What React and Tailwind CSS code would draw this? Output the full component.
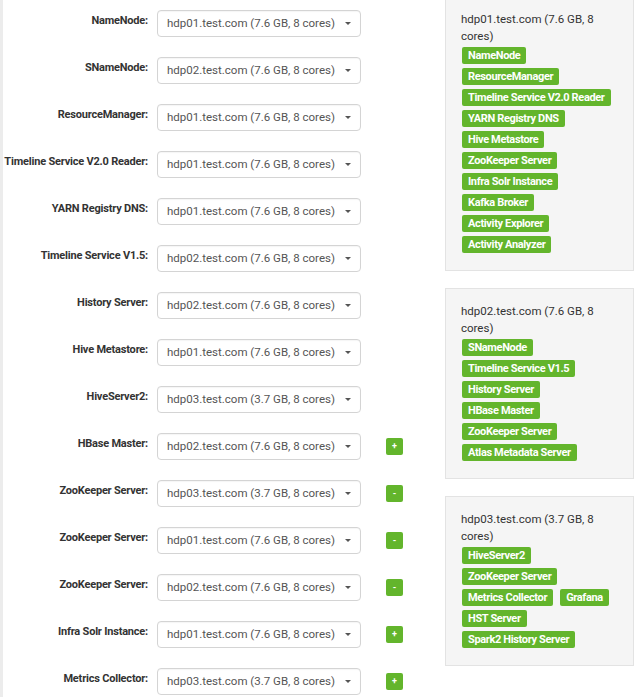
import React from 'react';

const rows = [
  { label: 'NameNode:', host: 'hdp01.test.com (7.6 GB, 8 cores)' },
  { label: 'SNameNode:', host: 'hdp02.test.com (7.6 GB, 8 cores)' },
  { label: 'ResourceManager:', host: 'hdp01.test.com (7.6 GB, 8 cores)' },
  { label: 'Timeline Service V2.0 Reader:', host: 'hdp01.test.com (7.6 GB, 8 cores)' },
  { label: 'YARN Registry DNS:', host: 'hdp01.test.com (7.6 GB, 8 cores)' },
  { label: 'Timeline Service V1.5:', host: 'hdp02.test.com (7.6 GB, 8 cores)' },
  { label: 'History Server:', host: 'hdp02.test.com (7.6 GB, 8 cores)' },
  { label: 'Hive Metastore:', host: 'hdp01.test.com (7.6 GB, 8 cores)' },
  { label: 'HiveServer2:', host: 'hdp03.test.com (3.7 GB, 8 cores)' },
  { label: 'HBase Master:', host: 'hdp02.test.com (7.6 GB, 8 cores)', btn: '+' },
  { label: 'ZooKeeper Server:', host: 'hdp03.test.com (3.7 GB, 8 cores)', btn: '-' },
  { label: 'ZooKeeper Server:', host: 'hdp01.test.com (7.6 GB, 8 cores)', btn: '-' },
  { label: 'ZooKeeper Server:', host: 'hdp02.test.com (7.6 GB, 8 cores)', btn: '-' },
  { label: 'Infra Solr Instance:', host: 'hdp01.test.com (7.6 GB, 8 cores)', btn: '+' },
  { label: 'Metrics Collector:', host: 'hdp03.test.com (3.7 GB, 8 cores)', btn: '+' },
];

const hosts = [
  {
    name: 'hdp01.test.com (7.6 GB, 8 cores)',
    comps: [['NameNode'], ['ResourceManager'], ['Timeline Service V2.0 Reader'], ['YARN Registry DNS'], ['Hive Metastore'], ['ZooKeeper Server'], ['Infra Solr Instance'], ['Kafka Broker'], ['Activity Explorer'], ['Activity Analyzer']],
  },
  {
    name: 'hdp02.test.com (7.6 GB, 8 cores)',
    comps: [['SNameNode'], ['Timeline Service V1.5'], ['History Server'], ['HBase Master'], ['ZooKeeper Server'], ['Atlas Metadata Server']],
  },
  {
    name: 'hdp03.test.com (3.7 GB, 8 cores)',
    comps: [['HiveServer2'], ['ZooKeeper Server'], ['Metrics Collector', 'Grafana'], ['HST Server'], ['Spark2 History Server']],
  },
];

const HostSelect = ({ value }) => (
  <div className="w-[204px] h-[27px] flex items-center justify-between pl-[9px] pr-[9px] bg-white border border-[#d4d4d4] rounded-[4px] shadow-[inset_0_1px_1px_rgba(0,0,0,0.04)] text-[11.5px] text-[#555]">
    <span className="whitespace-nowrap">{value}</span>
    <span className="w-0 h-0 border-l-[3.5px] border-r-[3.5px] border-t-[3.5px] border-l-transparent border-r-transparent border-t-[#555]" />
  </div>
);

const App = () => {
  return (
    <div className="h-[697px] overflow-hidden bg-white border-l-[3px] border-[#ececec] flex" style={{ fontFamily: 'Roboto, "Liberation Sans", sans-serif' }}>
      <div className="w-[442px] pt-[10px] flex flex-col gap-[20px]">
        {rows.map((r, i) => (
          <div key={i} className="flex items-start">
            <div className="w-[145px] text-right text-[11px] leading-4 font-bold text-[#333] pt-[3px] whitespace-nowrap tracking-[-0.2px]">
              {r.label}
            </div>
            <div className="ml-[9px]">
              <HostSelect value={r.host} />
            </div>
            {r.btn && (
              <div className="ml-[25px] mt-[5px] w-[17px] h-[17px] rounded-[2px] bg-[#63b52c] text-white text-[9px] font-bold leading-none flex items-center justify-center">
                {r.btn}
              </div>
            )}
          </div>
        ))}
      </div>
      <div className="w-[189px] -mt-[4px] flex flex-col gap-[17px]">
        {hosts.map((h, i) => (
          <div key={i} className="bg-[#f5f5f5] border border-[#e3e3e3] pt-[14px] pl-[15px] pr-[12px] pb-[17px]">
            <div className="text-[11.5px] leading-[17px] text-[#333] mb-[2px]">{h.name}</div>
            <div className="flex flex-col gap-[4px]">
              {h.comps.map((line, j) => (
                <div key={j} className="flex gap-[7px] pl-[1px]">
                  {line.map((c) => (
                    <span key={c} className="h-[17px] px-[6px] rounded-[2px] bg-[#63b52c] text-white text-[11px] font-bold leading-[17px] whitespace-nowrap tracking-[-0.35px]">
                      {c}
                    </span>
                  ))}
                </div>
              ))}
            </div>
          </div>
        ))}
      </div>
    </div>
  );
};

export default App;
